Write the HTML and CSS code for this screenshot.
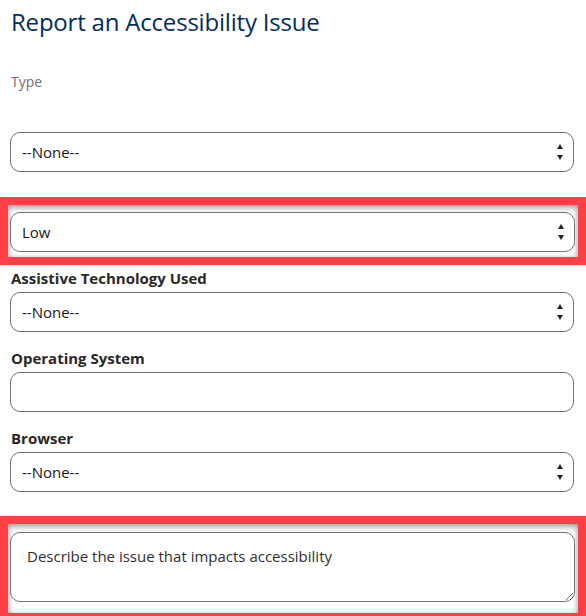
FILE: index.html
```html
<!DOCTYPE html>
<html lang="en">
<head>
<meta charset="utf-8">
<title>Report an Accessibility Issue</title>
<link rel="stylesheet" href="styles.css">
</head>
<body>
<main class="form">
  <h1 class="title">Report an Accessibility Issue</h1>
  <div class="type-label">Type</div>
  <select class="field select first"><option>--None--</option></select>
  <div class="highlight hl-select">
    <select class="field select"><option>Low</option></select>
  </div>
  <label class="label label-first">Assistive Technology Used</label>
  <select class="field select"><option>--None--</option></select>
  <label class="label">Operating System</label>
  <input class="field" type="text">
  <label class="label">Browser</label>
  <select class="field select"><option>--None--</option></select>
  <div class="highlight hl-text">
    <textarea class="field area">Describe the issue that impacts accessibility</textarea>
  </div>
</main>
</body>
</html>
```
FILE: styles.css
```css
html, body {
  margin: 0;
  padding: 0;
  background: #ffffff;
}
body {
  font-family: "Open Sans", "Noto Sans", "DejaVu Sans", sans-serif;
  color: #181818;
  width: 586px;
  height: 616px;
  overflow: hidden;
}
.form {
  display: flex;
  flex-direction: column;
  padding: 0 12px 0 10px;
}
.title {
  margin: 6px 0 0 1px;
  font-size: 24px;
  line-height: 32px;
  font-weight: 400;
  color: #032d60;
  letter-spacing: -0.2px;
}
.type-label {
  margin: 34px 0 0 1px;
  font-size: 14px;
  line-height: 20px;
  color: #706e6b;
}
.field {
  box-sizing: border-box;
  width: 100%;
  height: 40px;
  border: 1px solid #747474;
  border-radius: 10px;
  background: #ffffff;
  font-family: inherit;
  font-size: 15px;
  color: #181818;
  padding: 0 11px;
  margin: 0;
  outline: none;
}
.select {
  -webkit-appearance: none;
  appearance: none;
  background-image: url("data:image/svg+xml,%3Csvg xmlns='http://www.w3.org/2000/svg' width='8' height='18' viewBox='0 0 8 18'%3E%3Cpath d='M4 1 L7 6 L1 6 Z' fill='%23222'/%3E%3Cpath d='M1 12 L7 12 L4 17 Z' fill='%23222'/%3E%3C/svg%3E");
  background-repeat: no-repeat;
  background-position: right 9px center;
  background-size: 8px 18px;
}
.first {
  margin-top: 40px;
}
.highlight {
  border: 8px solid #fc4046;
  box-shadow: inset 0 2px 6px rgba(0, 0, 0, 0.45);
  background: #ffffff;
}
.hl-select {
  margin: 25px -12px 0 -10px;
  padding: 7px 3px 5px 2px;
}
.hl-text {
  margin: 24px -12px 0 -10px;
  padding: 8px 3px 6px 2px;
}
.label {
  display: block;
  margin: 16px 0 4px 1px;
  font-size: 15px;
  line-height: 20px;
  font-weight: 700;
  color: #2b2826;
}
.label-first {
  margin-top: 3px;
}
.area {
  height: 70px;
  padding: 13px 16px 8px;
  line-height: 20px;
  resize: vertical;
  color: #2e2e2e;
}
```
